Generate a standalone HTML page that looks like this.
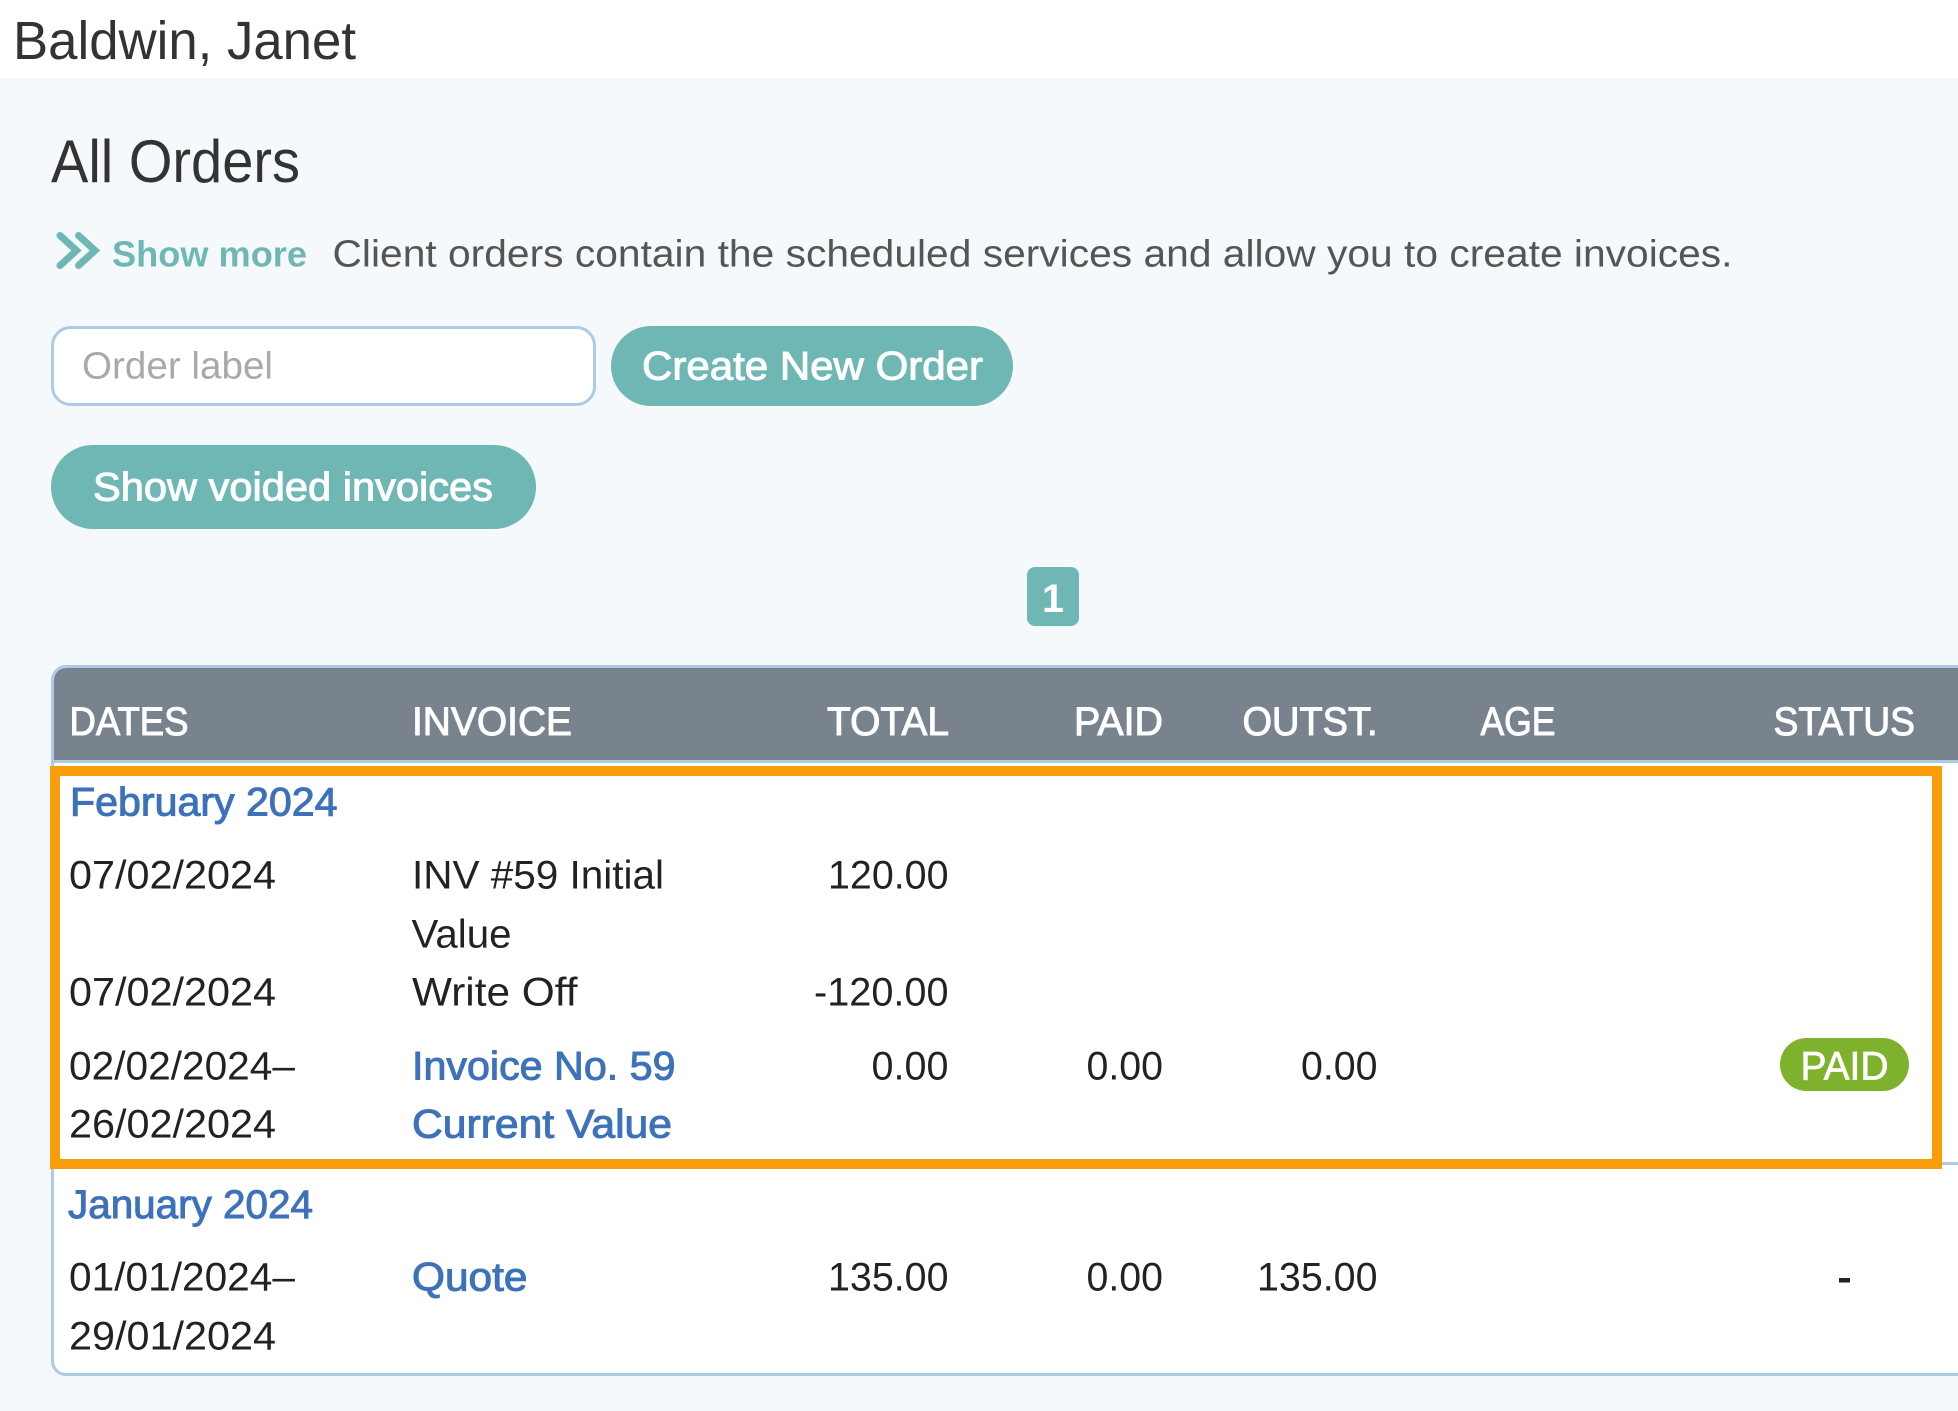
<!DOCTYPE html>
<html lang="en">
<head>
<meta charset="utf-8">
<title>All Orders</title>
<style>
html,body{margin:0;padding:0;width:1958px;height:1411px;overflow:hidden;background:#f5f9fc}
svg{display:block;position:absolute;left:0;top:0}
text{font-family:"Liberation Sans",Arial,sans-serif;fill:#222}
.h{fill:#333}
.b{font-size:39.5px}
.semi{stroke-width:1px}
.w{fill:#fff;stroke:#fff}
.l{fill:#3d72bb;stroke:#3d72bb}
.m{fill:#555}
</style>
</head>
<body>
<svg width="1958" height="1411" viewBox="0 0 1958 1411" xmlns="http://www.w3.org/2000/svg">
<rect width="1958" height="1411" fill="#f5f9fc"/>
<rect width="1958" height="78" fill="#fff"/>
<text class="h" x="13" y="59" font-size="54" textLength="343" lengthAdjust="spacingAndGlyphs">Baldwin, Janet</text>
<text class="h" x="51" y="182" font-size="60" textLength="249" lengthAdjust="spacingAndGlyphs">All Orders</text>

<path d="M60 235.500L76.500 250.500L60 265.500M78.500 235.500L95 250.500L78.500 265.500" fill="none" stroke="#6eb7b5" stroke-width="7" stroke-linecap="round" stroke-linejoin="miter"/>
<text x="112" y="266.500" font-size="36" font-weight="700" style="fill:#6eb7b5" textLength="195" lengthAdjust="spacingAndGlyphs">Show more</text>
<text class="m" x="332.500" y="266.500" font-size="38" textLength="1400" lengthAdjust="spacingAndGlyphs">Client orders contain the scheduled services and allow you to create invoices.</text>

<rect x="52.500" y="327.500" width="542" height="77" rx="18" fill="#fff" stroke="#aecbe6" stroke-width="3"/>
<text x="82" y="378.500" font-size="38" style="fill:#a9a9a9" textLength="191" lengthAdjust="spacingAndGlyphs">Order label</text>
<rect x="611" y="326" width="402" height="80" rx="40" fill="#6eb7b5"/>
<text class="b semi w" x="642" y="379.500" textLength="341" lengthAdjust="spacingAndGlyphs">Create New Order</text>
<rect x="51" y="445" width="485" height="84" rx="42" fill="#6eb7b5"/>
<text class="b semi w" x="93" y="500.500" textLength="400" lengthAdjust="spacingAndGlyphs">Show voided invoices</text>

<rect x="1027" y="567" width="52" height="59" rx="8" fill="#6eb7b5"/>
<text class="b" font-weight="700" x="1053" y="612" text-anchor="middle" style="fill:#fff">1</text>

<path d="M1958 666.500H66A13.500 13.500 0 0 0 52.500 680V1361A13.500 13.500 0 0 0 66 1374.500H1958V666.500Z" fill="#fff" stroke="none"/>
<path d="M1958 668H66A12 12 0 0 0 54 680V760H1958Z" fill="#78838e"/>
<rect x="54" y="760" width="1904" height="3" fill="#aecbe6"/>
<path d="M1958 666.500H66A13.500 13.500 0 0 0 52.500 680V1361A13.500 13.500 0 0 0 66 1374.500H1958" fill="none" stroke="#aecbe6" stroke-width="3"/>
<rect x="54" y="1162" width="1904" height="3" fill="#aecbe6"/>

<text class="b semi w" x="69.500" y="735" textLength="119" lengthAdjust="spacingAndGlyphs">DATES</text>
<text class="b semi w" x="412" y="735" textLength="160" lengthAdjust="spacingAndGlyphs">INVOICE</text>
<text class="b semi w" x="827" y="735" textLength="122" lengthAdjust="spacingAndGlyphs">TOTAL</text>
<text class="b semi w" x="1074" y="735" textLength="89" lengthAdjust="spacingAndGlyphs">PAID</text>
<text class="b semi w" x="1242.500" y="735" textLength="135" lengthAdjust="spacingAndGlyphs">OUTST.</text>
<text class="b semi w" x="1480.500" y="735" textLength="75" lengthAdjust="spacingAndGlyphs">AGE</text>
<text class="b semi w" x="1773.500" y="735" textLength="141.500" lengthAdjust="spacingAndGlyphs">STATUS</text>

<rect x="55" y="771" width="1882" height="393" fill="#fff" stroke="#f99d0b" stroke-width="10"/>

<text class="b semi l" x="70" y="815.500" textLength="267.500" lengthAdjust="spacingAndGlyphs">February 2024</text>
<text class="b" x="69" y="888.500" textLength="207" lengthAdjust="spacingAndGlyphs">07/02/2024</text>
<text class="b" x="412" y="888.500" textLength="252" lengthAdjust="spacingAndGlyphs">INV #59 Initial</text>
<text class="b" x="828" y="888.500" textLength="120.500" lengthAdjust="spacingAndGlyphs">120.00</text>
<text class="b" x="411.500" y="947.500" textLength="100" lengthAdjust="spacingAndGlyphs">Value</text>
<text class="b" x="69" y="1005.500" textLength="207" lengthAdjust="spacingAndGlyphs">07/02/2024</text>
<text class="b" x="412" y="1005.500" textLength="165.500" lengthAdjust="spacingAndGlyphs">Write Off</text>
<text class="b" x="814" y="1005.500" textLength="134.500" lengthAdjust="spacingAndGlyphs">-120.00</text>
<text class="b" x="69" y="1079.500" textLength="226" lengthAdjust="spacingAndGlyphs">02/02/2024–</text>
<text class="b semi l" x="412" y="1079.500" textLength="263.500" lengthAdjust="spacingAndGlyphs">Invoice No. 59</text>
<text class="b" x="871.500" y="1079.500" textLength="77" lengthAdjust="spacingAndGlyphs">0.00</text>
<text class="b" x="1086.500" y="1079.500" textLength="76.500" lengthAdjust="spacingAndGlyphs">0.00</text>
<text class="b" x="1301" y="1079.500" textLength="76.500" lengthAdjust="spacingAndGlyphs">0.00</text>
<rect x="1780" y="1038" width="129" height="53" rx="26.500" fill="#7fb22c"/>
<text class="b semi w" x="1800.500" y="1079.500" style="stroke-width:.7px" textLength="88" lengthAdjust="spacingAndGlyphs">PAID</text>
<text class="b" x="69" y="1137.500" textLength="207" lengthAdjust="spacingAndGlyphs">26/02/2024</text>
<text class="b semi l" x="412" y="1137.500" textLength="260" lengthAdjust="spacingAndGlyphs">Current Value</text>

<text class="b semi l" x="68" y="1218" textLength="245" lengthAdjust="spacingAndGlyphs">January 2024</text>
<text class="b" x="69" y="1290.500" textLength="226" lengthAdjust="spacingAndGlyphs">01/01/2024–</text>
<text class="b semi l" x="412" y="1290.500" textLength="115.500" lengthAdjust="spacingAndGlyphs">Quote</text>
<text class="b" x="828" y="1290.500" textLength="120.500" lengthAdjust="spacingAndGlyphs">135.00</text>
<text class="b" x="1086.500" y="1290.500" textLength="76.500" lengthAdjust="spacingAndGlyphs">0.00</text>
<text class="b" x="1257" y="1290.500" textLength="120.500" lengthAdjust="spacingAndGlyphs">135.00</text>
<rect x="1839" y="1278" width="11" height="4.500" fill="#222"/>
<text class="b" x="69" y="1349.500" textLength="207" lengthAdjust="spacingAndGlyphs">29/01/2024</text>
</svg>
</body>
</html>
